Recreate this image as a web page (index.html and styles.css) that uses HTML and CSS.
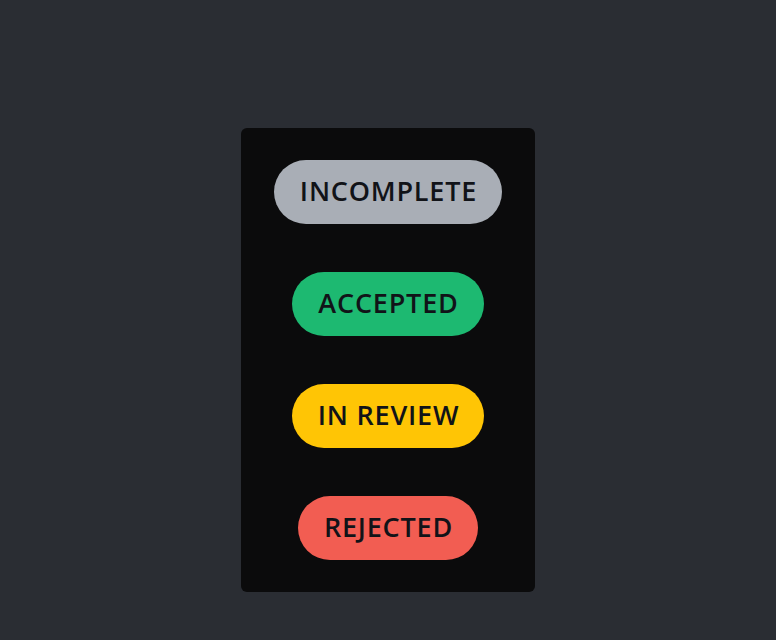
FILE: index.html
```html
<!DOCTYPE html>
<html>
<head>
<meta charset="utf-8">
<link rel="stylesheet" href="styles.css">
</head>
<body>
<div class="card">
  <span class="pill pill-gray">INCOMPLETE</span>
  <span class="pill pill-green">ACCEPTED</span>
  <span class="pill pill-yellow">IN REVIEW</span>
  <span class="pill pill-red">REJECTED</span>
</div>
</body>
</html>
```
FILE: styles.css
```css
html, body {
  margin: 0;
  padding: 0;
  background: #2a2d33;
  height: 100%;
}
body {
  display: flex;
  justify-content: center;
  align-items: flex-start;
  font-family: "Open Sans", "Noto Sans", sans-serif;
}
.card {
  margin-top: 128px;
  width: 294px;
  box-sizing: border-box;
  padding: 32px 0;
  background: #0b0b0c;
  border-radius: 6px;
  display: flex;
  flex-direction: column;
  align-items: center;
  gap: 48px;
}
.pill {
  display: flex;
  align-items: center;
  justify-content: center;
  height: 64px;
  padding: 0 25px 3px 26px;
  border-radius: 32px;
  font-size: 27px;
  font-weight: 600;
  letter-spacing: 0.8px;
  color: #111318;
  box-sizing: border-box;
}
.pill-gray { background: #a9aeb6; }
.pill-green { background: #1db971; }
.pill-yellow { background: #ffc505; }
.pill-red { background: #f25d52; }
```
